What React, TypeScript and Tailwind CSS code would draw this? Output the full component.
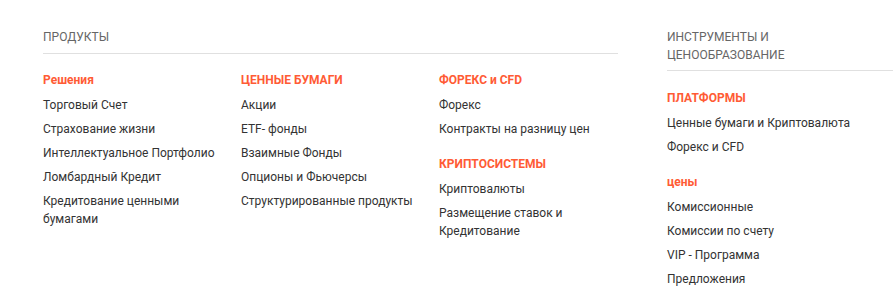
import React from 'react';

type Group = { title: string; items: string[] };

const products: Group[][] = [
  [
    {
      title: 'Решения',
      items: [
        'Торговый Счет',
        'Страхование жизни',
        'Интеллектуальное Портфолио',
        'Ломбардный Кредит',
        'Кредитование ценными бумагами',
      ],
    },
  ],
  [
    {
      title: 'ЦЕННЫЕ БУМАГИ',
      items: ['Акции', 'ETF- фонды', 'Взаимные Фонды', 'Опционы и Фьючерсы', 'Структурированные продукты'],
    },
  ],
  [
    { title: 'ФОРЕКС и CFD', items: ['Форекс', 'Контракты на разницу цен'] },
    { title: 'КРИПТОСИСТЕМЫ', items: ['Криптовалюты', 'Размещение ставок и Кредитование'] },
  ],
];

const pricing: Group[] = [
  { title: 'ПЛАТФОРМЫ', items: ['Ценные бумаги и Криптовалюта', 'Форекс и CFD'] },
  { title: 'цены', items: ['Комиссионные', 'Комиссии по счету', 'VIP - Программа', 'Предложения'] },
];

const LinkGroup: React.FC<{ group: Group; first: boolean }> = ({ group, first }) => (
  <div className={first ? '' : 'mt-[17px]'}>
    <h4 className="text-[12px] leading-[18px] font-bold text-[#ff5b35] mb-[7px]">{group.title}</h4>
    <ul>
      {group.items.map((item) => (
        <li key={item} className="text-[12px] leading-[18px] text-[#333] mb-[6px]">
          {item}
        </li>
      ))}
    </ul>
  </div>
);

export default function App() {
  return (
    <div
      className="w-[893px] h-[301px] overflow-hidden bg-white"
      style={{ fontFamily: 'Roboto, "Liberation Sans", sans-serif' }}
    >
      <div className="flex gap-[49px] pl-[43px] pt-[28px]">
        <section className="w-[575px] shrink-0">
          <h3 className="text-[12px] leading-[18px] text-[#666] pb-[7px] border-b border-[#e0e0e0]">
            ПРОДУКТЫ
          </h3>
          <div className="grid grid-cols-3 gap-x-[19px] mt-[17px]">
            {products.map((col, i) => (
              <div key={i}>
                {col.map((g, j) => (
                  <LinkGroup key={g.title} group={g} first={j === 0} />
                ))}
              </div>
            ))}
          </div>
        </section>

        <section className="w-[226px] shrink-0">
          <h3 className="text-[12px] leading-[18px] text-[#666] pb-[6px] pr-[20px] border-b border-[#e0e0e0]">
            ИНСТРУМЕНТЫ И ЦЕНООБРАЗОВАНИЕ
          </h3>
          <div className="mt-[18px]">
            {pricing.map((g, j) => (
              <LinkGroup key={g.title} group={g} first={j === 0} />
            ))}
          </div>
        </section>
      </div>
    </div>
  );
}
